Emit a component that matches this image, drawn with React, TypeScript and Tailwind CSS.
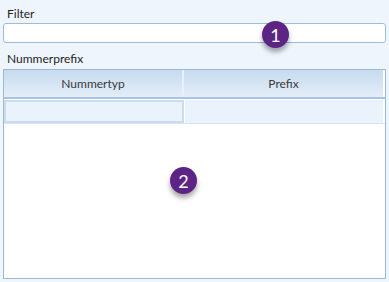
import React from 'react';

function Badge({ n }: { n: number }) {
    return (
        <div className="absolute w-[27px] h-[27px] rounded-full bg-[#5c2485] text-white flex items-center justify-center text-[18px] shadow-[0_4px_5px_rgba(0,0,0,0.35)] leading-none">
            {n}
        </div>
    );
}

export default function App() {
    return (
        <div className="w-[389px] h-[282px] bg-[#eef5fd] relative text-[12px] text-[#1e1e1e] font-['Lato','Noto_Sans',sans-serif] overflow-hidden">
            <div className="pt-[5px] pl-[7px] h-[23px]">Filter</div>
            <div className="mx-[3px] w-[383px] h-[20px] bg-white border border-[#9fbcdc] rounded-[3px]" />
            <div className="pt-[7px] pl-[7px] h-[26px]">Nummerprefix</div>
            {/* Grid */}
            <div className="ml-[3px] w-[383px] h-[210px] bg-white border border-[#9bbad9] flex flex-col">
                <div className="flex h-[29px] border-b-2 border-[#a8c4e2]">
                    <div className="w-[180px] flex items-center justify-center bg-gradient-to-b from-[#c7dbef] to-[#e4edf9] border-r-2 border-[#e8f0fa] text-[#3a3a3a]">
                        Nummertyp
                    </div>
                    <div className="flex-1 mr-[2px] flex items-center justify-center bg-gradient-to-b from-[#c7dbef] to-[#e4edf9] text-[#3a3a3a]">
                        Prefix
                    </div>
                </div>
                <div className="flex h-[24px] border-b border-[#d6e4f3] mt-[1px]">
                    <div className="w-[180px] bg-[#eaf2fc] border-2 border-[#cadcf0]" />
                    <div className="flex-1 mr-[2px] bg-[#eaf2fc] border-l border-white" />
                </div>
            </div>
            <div className="absolute left-[262px] top-[21px]">
                <Badge n={1} />
            </div>
            <div className="absolute left-[170px] top-[167px]">
                <Badge n={2} />
            </div>
        </div>
    );
}
